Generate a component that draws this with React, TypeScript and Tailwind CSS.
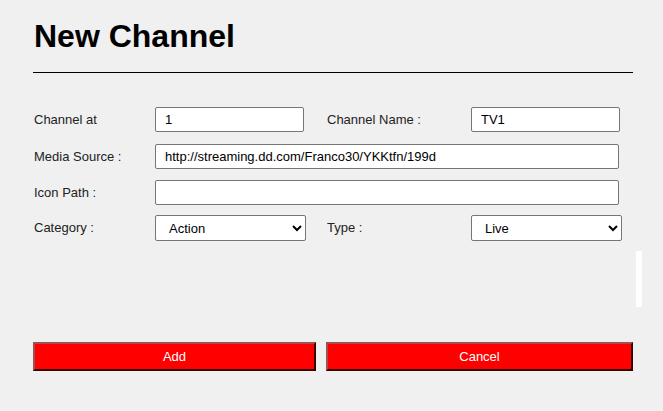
export default function App() {
  const inp = "h-[25px] border border-[#767676] rounded-[2px] bg-white px-[9px] text-[13px] text-black outline-none";
  return (
    <div className="w-[663px] h-[411px] bg-[#f0f0f0] overflow-hidden" style={{ fontFamily: '"Liberation Sans", Arial, sans-serif' }}>
      <div className="pt-[16px] pl-[34px]">
        <h1 className="text-[32px] font-bold leading-[40px] text-black">New Channel</h1>
      </div>
      <div className="mt-[16px] ml-[33px] w-[600px] h-px bg-black" />
      <div className="mt-[34px] pl-[34px] flex flex-col text-[13px] text-[#222]">
        <div className="flex items-center h-[25px]">
          <span className="w-[121px]">Channel at</span>
          <input className={inp + " w-[149px]"} defaultValue="1" />
          <span className="ml-[23px] w-[144px]">Channel Name :</span>
          <input className={inp + " w-[149px] bg-[#e8f0fe]"} defaultValue="TV1" />
        </div>
        <div className="flex items-center h-[25px] mt-[12px]">
          <span className="w-[121px]">Media Source :</span>
          <input className={inp + " w-[464px]"} defaultValue="http://streaming.dd.com/Franco30/YKKtfn/199d" />
        </div>
        <div className="flex items-center h-[25px] mt-[11px]">
          <span className="w-[121px]">Icon Path :</span>
          <input className={inp + " w-[464px]"} defaultValue="" />
        </div>
        <div className="flex items-center h-[26px] mt-[10px]">
          <span className="w-[121px]">Category :</span>
          <select className={inp + " w-[151px] h-[26px] px-[6px]"} defaultValue="Action"><option>Action</option></select>
          <span className="ml-[21px] w-[144px]">Type :</span>
          <select className={inp + " w-[151px] h-[26px] px-[6px]"} defaultValue="Live"><option>Live</option></select>
        </div>
      </div>
      <div className="h-[101px] pt-[10px]">
        <div className="ml-[636px] w-[6px] h-[56px] bg-white" />
      </div>
      <div className="flex pl-[33px] gap-[10px]">
        <button className="w-[283px] h-[29px] bg-[#ff0000] text-white text-[13px] border-2 border-t-[#a05050] border-l-[#a05050] border-r-[#3a0000] border-b-[#3a0000]">Add</button>
        <button className="w-[307px] h-[29px] bg-[#ff0000] text-white text-[13px] border-2 border-t-[#a05050] border-l-[#a05050] border-r-[#3a0000] border-b-[#3a0000]">Cancel</button>
      </div>
    </div>
  );
}
